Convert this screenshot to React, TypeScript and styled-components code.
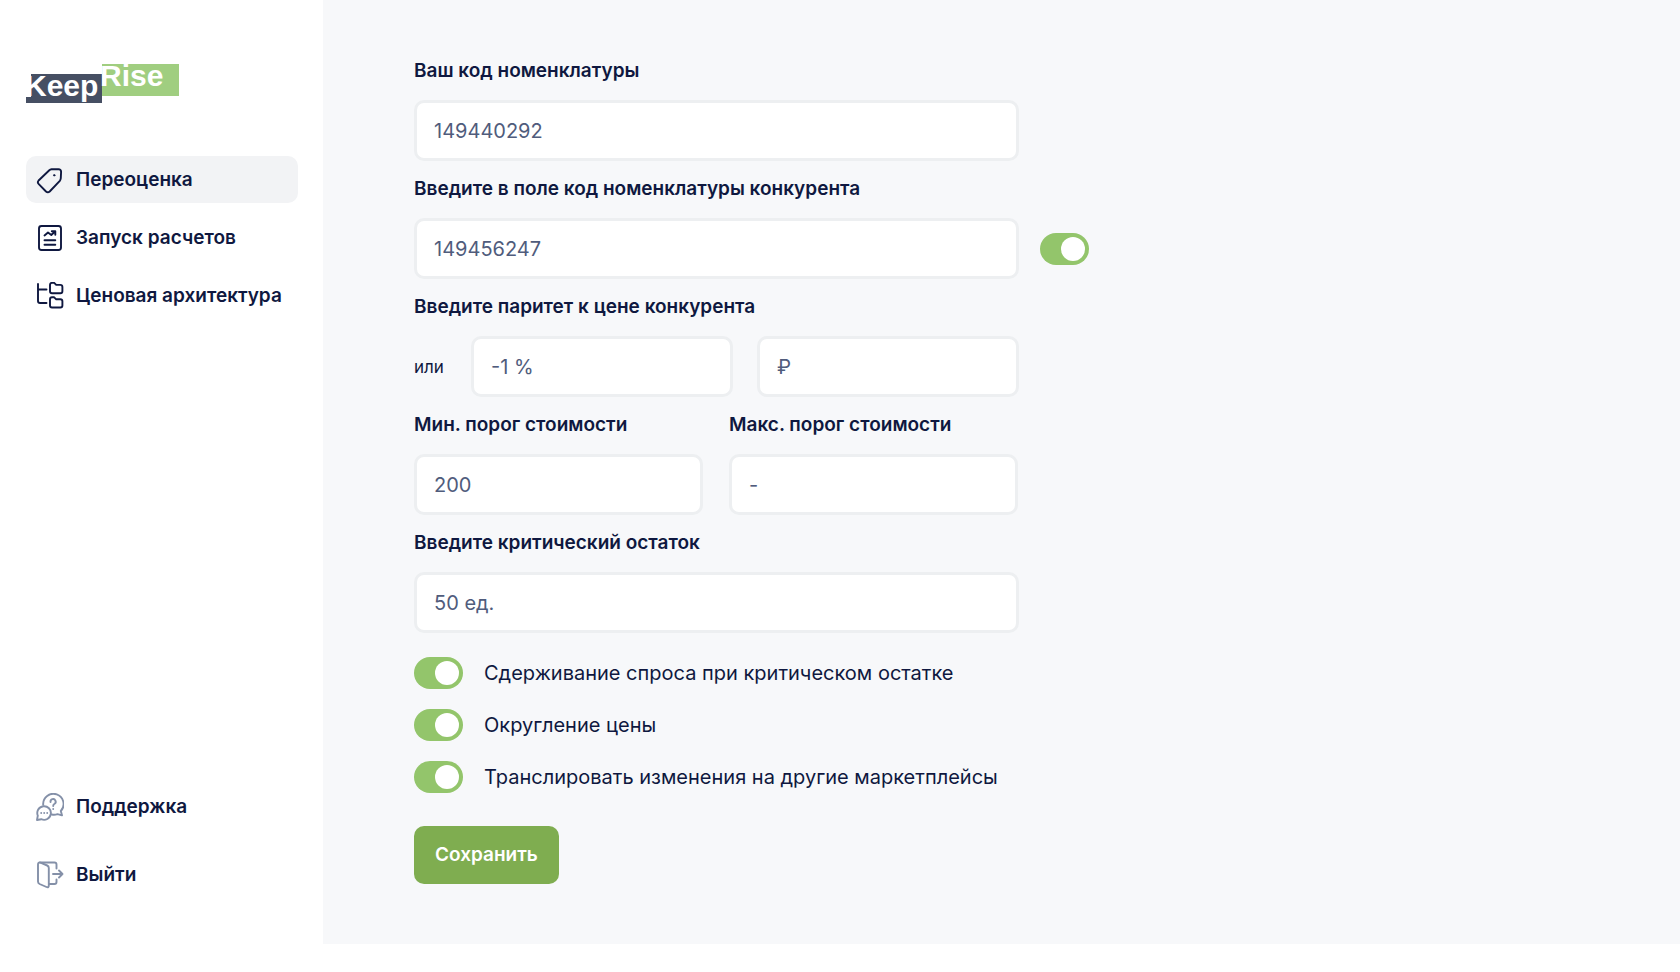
import React from 'react';
import styled, { createGlobalStyle } from 'styled-components';

const GlobalStyle = createGlobalStyle`
  *, *::before, *::after { box-sizing: border-box; }
  body {
    margin: 0;
    background: #ffffff;
    color: #0f1840;
    font-family: Inter, Roboto, "Liberation Sans", sans-serif;
    font-size: 20px;
    line-height: 24px;
  }
`;

const Page = styled.div`
  display: flex;
  align-items: stretch;
`;

const Sidebar = styled.aside`
  flex: 0 0 323px;
  display: flex;
  flex-direction: column;
  padding: 62px 25px 46px 26px;
  background: #ffffff;
`;

const LogoLink = styled.a`
  display: block;
  height: 44px;
  margin-bottom: 50px;
  svg { display: block; }
`;

const Nav = styled.nav`
  display: flex;
  flex-direction: column;
  gap: 11px;
`;

const FooterNav = styled(Nav)`
  gap: 21px;
  margin-top: auto;
`;

const NavLink = styled.a<{ $active?: boolean }>`
  display: flex;
  align-items: center;
  gap: 12px;
  height: 47px;
  padding: 0 0 0 10px;
  border-radius: 10px;
  background: ${({ $active }) => ($active ? '#f2f3f5' : 'transparent')};
  color: inherit;
  font-size: 19px;
  font-weight: 600;
  text-decoration: none;
  white-space: nowrap;
  svg { flex: none; }
`;

const Main = styled.main`
  flex: 1;
  min-width: 0;
  padding: 59px 91px 60px;
  background: #f7f8fa;
`;

const Form = styled.form`
  display: flex;
  flex-direction: column;
  align-items: flex-start;
  gap: 16px;
`;

const Field = styled.div`
  display: flex;
  flex-direction: column;
  gap: 17px;
  width: 100%;
  max-width: 605px;
`;

const Label = styled.label`
  font-size: 19px;
  font-weight: 600;
  white-space: nowrap;
`;

const Columns = styled.div`
  display: grid;
  grid-template-columns: 1fr 1fr;
  gap: 26px;
  width: 100%;
  max-width: 604px;
`;

const ParityRow = styled.div`
  display: grid;
  grid-template-columns: 33px 1fr 1fr;
  align-items: center;
  gap: 24px;
`;

const Hint = styled.span`
  font-size: 17px;
`;

const FieldRow = styled.div`
  display: flex;
  align-items: flex-end;
  gap: 21px;
  width: 100%;
`;

const SwitchSlot = styled.div`
  display: flex;
  align-items: center;
  height: 61px;
`;

const TextInput = styled.input`
  width: 100%;
  min-width: 0;
  height: 61px;
  padding: 0 17px;
  border: 3px solid #edeff1;
  border-radius: 10px;
  background: #ffffff;
  color: #505c7c;
  font: inherit;
  outline: none;
`;

const Switch = styled.input`
  appearance: none;
  flex: none;
  display: flex;
  align-items: center;
  width: 49px;
  height: 32px;
  margin: 0;
  padding: 0 4px;
  border-radius: 16px;
  background: #c9cdd6;
  cursor: pointer;
  &::before {
    content: '';
    width: 24px;
    height: 24px;
    border-radius: 50%;
    background: #ffffff;
  }
  &:checked {
    justify-content: flex-end;
    background: #93c56b;
  }
`;

const Options = styled.div`
  display: flex;
  flex-direction: column;
  gap: 20px;
  padding: 8px 0 17px;
`;

const Option = styled.label`
  display: flex;
  align-items: center;
  gap: 21px;
  cursor: pointer;
`;

const SaveButton = styled.button`
  height: 58px;
  padding: 0 21px;
  border: 0;
  border-radius: 10px;
  background: #7fad50;
  color: #ffffff;
  font: inherit;
  font-size: 19px;
  font-weight: 600;
  cursor: pointer;
`;

const Logo = () => (
  <svg width="156" height="44" viewBox="0 0 156 44" role="img" aria-label="KeepRise">
    <path d="M5 12H76V41H0V35H5Z" fill="#464f63" />
    <rect x="76" y="2" width="77" height="32" fill="#a0ce80" />
    <g fontFamily="'Liberation Sans', sans-serif" fontSize="30" fontWeight="700" fill="#ffffff">
      <text x="-1" y="34">Keep</text>
      <text x="74" y="24">Rise</text>
    </g>
  </svg>
);

const Glyph = ({ muted, children }: { muted?: boolean; children: React.ReactNode }) => (
  <svg
    width="28"
    height="28"
    viewBox="0 0 28 28"
    fill="none"
    stroke={muted ? '#8490a8' : '#0f1840'}
    strokeWidth="1.9"
    strokeLinecap="round"
    strokeLinejoin="round"
    aria-hidden="true"
  >
    {children}
  </svg>
);

const TagIcon = () => (
  <Glyph>
    <path d="M15.5 3.2L22.4 3.1Q25 3.2 25.1 5.7L24.8 12.3Q24.7 13.7 23.8 14.8L13.7 25.5Q11.8 27.2 10 25.5L2.8 18.2Q1 16.4 2.6 14.5L13.3 4.2Q14.2 3.3 15.5 3.2Z" />
    <circle cx="18.2" cy="9.3" r="0.7" fill="#0f1840" strokeWidth="1" />
  </Glyph>
);

const ReportIcon = () => (
  <Glyph>
    <rect x="3" y="2" width="22" height="24" rx="2.5" />
    <path d="M8.5 11.5L12 8.5L15.3 11L19 7.5M15.8 7.2H19.3V10.7M8.5 16.2H19.3M8.5 20.8H19.3" />
  </Glyph>
);

const TreeIcon = () => (
  <Glyph>
    <path d="M2 2V19Q2 21 4 21H10.5M2 7.5H10.5" />
    <path d="M14 2.9Q14 .9 16 .9H18.2L20.2 2.9H24.3Q26.4 2.9 26.4 4.9V9.2Q26.4 11.2 24.4 11.2H16Q14 11.2 14 9.2Z" />
    <path d="M14 17.4Q14 15.3 16 15.3H18.2L20.2 17.3H24.3Q26.4 17.3 26.4 19.3V23.5Q26.4 25.5 24.4 25.5H16Q14 25.5 14 23.5Z" />
  </Glyph>
);

const SupportIcon = () => (
  <Glyph muted>
    <path d="M7.2 11.8A10.2 10.2 0 1 1 24.8 18L26 22.3L21.5 21.1A10 10 0 0 1 15.8 21.5" />
    <path d="M1 27L1.8 22.6A6.8 6.8 0 1 1 5.3 26.2Z" />
    <path d="M14.5 9A2.6 2.6 0 1 1 18.6 10.8Q17.2 11.6 17.2 13M17.2 15.9V16.1M5.2 20V20.1M8.2 20V20.1M11.2 20V20.1" />
  </Glyph>
);

const ExitIcon = () => (
  <Glyph muted>
    <path d="M4 1.5H18.5Q20.5 1.5 20.5 3.5V7.5M20.5 18.5V21Q20.5 23 18.5 23H13M17 13H26.5M23 9.5L26.5 13L23 16.5" />
    <path d="M2 3.5Q2 .8 4.5 1.7L11.2 4.5Q12.8 5.2 12.8 7V24.5Q12.8 27 10.5 26L3.6 23Q2 22.2 2 20.5Z" />
  </Glyph>
);

export default function App() {
  return (
    <>
      <GlobalStyle />
      <Page>
        <Sidebar>
          <LogoLink href="#"><Logo /></LogoLink>
          <Nav>
            <NavLink href="#" $active><TagIcon />Переоценка</NavLink>
            <NavLink href="#"><ReportIcon />Запуск расчетов</NavLink>
            <NavLink href="#"><TreeIcon />Ценовая архитектура</NavLink>
          </Nav>
          <FooterNav>
            <NavLink href="#"><SupportIcon />Поддержка</NavLink>
            <NavLink href="#"><ExitIcon />Выйти</NavLink>
          </FooterNav>
        </Sidebar>
        <Main>
          <Form onSubmit={(e) => e.preventDefault()}>
            <Field>
              <Label htmlFor="own">Ваш код номенклатуры</Label>
              <TextInput id="own" defaultValue="149440292" />
            </Field>
            <FieldRow>
              <Field>
                <Label htmlFor="rival">Введите в поле код номенклатуры конкурента</Label>
                <TextInput id="rival" defaultValue="149456247" />
              </Field>
              <SwitchSlot>
                <Switch type="checkbox" role="switch" aria-label="Код номенклатуры конкурента" defaultChecked />
              </SwitchSlot>
            </FieldRow>
            <Field>
              <Label htmlFor="percent">Введите паритет к цене конкурента</Label>
              <ParityRow>
                <Hint>или</Hint>
                <TextInput id="percent" defaultValue="-1 %" />
                <TextInput aria-label="Паритет в рублях" defaultValue="₽" />
              </ParityRow>
            </Field>
            <Columns>
              <Field>
                <Label htmlFor="min">Мин. порог стоимости</Label>
                <TextInput id="min" defaultValue="200" />
              </Field>
              <Field>
                <Label htmlFor="max">Макс. порог стоимости</Label>
                <TextInput id="max" defaultValue="-" />
              </Field>
            </Columns>
            <Field>
              <Label htmlFor="stock">Введите критический остаток</Label>
              <TextInput id="stock" defaultValue="50 ед." />
            </Field>
            <Options>
              <Option><Switch type="checkbox" role="switch" defaultChecked />Сдерживание спроса при критическом остатке</Option>
              <Option><Switch type="checkbox" role="switch" defaultChecked />Округление цены</Option>
              <Option><Switch type="checkbox" role="switch" defaultChecked />Транслировать изменения на другие маркетплейсы</Option>
            </Options>
            <SaveButton type="submit">Сохранить</SaveButton>
          </Form>
        </Main>
      </Page>
    </>
  );
}
